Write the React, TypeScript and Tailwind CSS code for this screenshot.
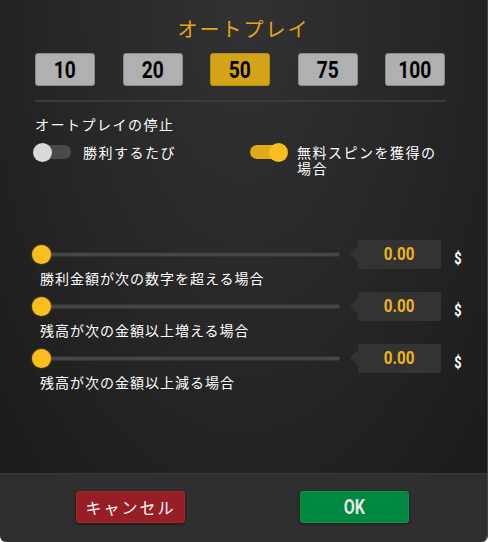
import React from 'react';

const jp = { fontFamily: '"Noto Sans CJK JP", "Noto Sans", sans-serif' };
const num = { fontFamily: 'Roboto, "Liberation Sans", sans-serif' };

const amounts = ['10', '20', '50', '75', '100'];

const sliders = [
  '勝利金額が次の数字を超える場合',
  '残高が次の金額以上増える場合',
  '残高が次の金額以上減る場合',
];

const Toggle: React.FC<{ on: boolean }> = ({ on }) => (
  <div className="relative w-[38px] h-[19px] shrink-0">
    <div
      className={`absolute top-[2px] h-[14px] rounded-full ${on ? 'left-0 w-[30px] bg-[#e2a91c]' : 'left-[8px] w-[30px] bg-[#4a4a4a]'}`}
    />
    <div
      className={`absolute top-0 w-[19px] h-[19px] rounded-full ${on ? 'left-[19px] bg-[#f7be1e]' : 'left-0 bg-[#d9d9d9]'}`}
    />
  </div>
);

const SliderRow: React.FC<{ label: string }> = ({ label }) => (
  <div className="flex flex-col">
    <div className="flex items-center h-[30px]">
      <div className="relative w-[308px] ml-[32px] h-[19px]">
        <div className="absolute left-[10px] right-0 top-[7px] h-[5px] bg-[#454545] rounded-sm border-y border-[#333]" />
        <div className="absolute left-0 top-0 w-[19px] h-[19px] rounded-full bg-[#f7be1e] shadow-[0_0_2px_#a07810]" />
      </div>
      <div className="ml-[10px] flex items-center">
        <div className="w-0 h-0 border-y-[8px] border-y-transparent border-r-[8px] border-r-[#333]" />
        <div className="w-[83px] h-[29px] bg-[#333] flex items-center justify-center text-[#f2b21c] text-[19px] font-bold" style={num}>
          <span className="inline-block scale-x-[0.8]">0.00</span>
        </div>
      </div>
      <div className="ml-[12px] mt-[10px] text-white text-[17px] font-bold" style={num}>
        <span className="inline-block scale-x-[0.75]">$</span>
      </div>
    </div>
    <div className="ml-[40px] text-white text-[14px] leading-[20px] -mt-[1px] tracking-[1px]" style={jp}>{label}</div>
  </div>
);

export default function App() {
  return (
    <div className="w-[488px] h-[542px] bg-white">
      <div className="w-[488px] h-[542px] flex flex-col rounded-b-[6px] overflow-hidden border-r border-[#444]">
        <div className="flex-1 bg-[radial-gradient(ellipse_at_top,#323232_0%,#262626_55%,#1b1b1b_100%)] flex flex-col">
          <div className="text-center text-[#e6a514] text-[20px] leading-[24px] mt-[17px] tracking-[2px]" style={jp}>
            オートプレイ
          </div>
          <div className="flex justify-between px-[35px] pr-[42px] mt-[12px]">
            {amounts.map((a) => (
              <div
                key={a}
                className={`w-[60px] h-[33px] rounded-[3px] flex items-center justify-center text-[24px] font-bold text-black border ${a === '50' ? 'bg-[#d4a418] border-[#b88c10]' : 'bg-[#b0b0b0] border-[#8a8a8a]'}`}
                style={num}
              >
                <span className="inline-block scale-x-[0.8]">{a}</span>
              </div>
            ))}
          </div>
          <div className="mx-[35px] mr-[41px] mt-[14px] h-[2px] bg-[#3a3a3a]" />
          <div className="ml-[35px] mt-[12px] text-white text-[14px] leading-[20px] tracking-[1.5px]" style={jp}>
            オートプレイの停止
          </div>
          <div className="flex mt-[9px] text-white text-[14px] leading-[16px] tracking-[1.5px]" style={jp}>
            <div className="flex items-start ml-[33px] w-[217px]">
              <Toggle on={false} />
              <span className="ml-[12px] mt-[1px]">勝利するたび</span>
            </div>
            <div className="flex items-start">
              <Toggle on={true} />
              <span className="ml-[9px] mt-[1px] w-[145px]">無料スピンを獲得の場合</span>
            </div>
          </div>
          <div className="flex flex-col mt-[63px] gap-[3px]">
            {sliders.map((s) => (
              <SliderRow key={s} label={s} />
            ))}
          </div>
        </div>
        <div className="h-[69px] bg-[#2f2f2f] border-t border-[#3a3a3a] flex items-start">
          <button
            className="ml-[76px] mt-[17px] w-[109px] h-[32px] rounded-[3px] bg-[#981e26] border border-[#a8242c] text-white text-[16px] tracking-[2px] shadow-[0_1px_3px_rgba(0,0,0,0.5)]"
            style={jp}
          >
            キャンセル
          </button>
          <button
            className="ml-[115px] mt-[17px] w-[109px] h-[32px] rounded-[3px] bg-[#008740] border border-[#12944a] text-[#e6e6e6] text-[20px] font-bold shadow-[0_1px_3px_rgba(0,0,0,0.5)]"
            style={num}
          >
            <span className="inline-block scale-x-[0.8]">OK</span>
          </button>
        </div>
      </div>
    </div>
  );
}
